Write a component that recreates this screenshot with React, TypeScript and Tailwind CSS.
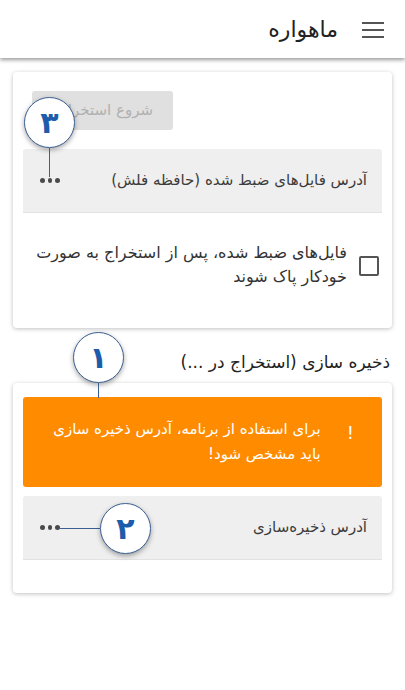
import { ReactNode } from 'react';

const font = "font-['DejaVu_Sans',sans-serif]";

const Dots = () => (
  <div className="flex items-center gap-[3px]" dir="ltr">
    <span className="w-[4.5px] h-[4.5px] rounded-full bg-[#4a4a4a]" />
    <span className="w-[4.5px] h-[4.5px] rounded-full bg-[#4a4a4a]" />
    <span className="w-[4.5px] h-[4.5px] rounded-full bg-[#4a4a4a]" />
  </div>
);

const Badge = ({ children }: { children: ReactNode }) => (
  <div className="w-[51px] h-[51px] rounded-full bg-white border-[1.5px] border-[#3b5f92] shadow-[0_2px_5px_rgba(0,0,0,0.35)] flex items-center justify-center text-[#1d5cab] text-[30px] font-bold leading-none">
    {children}
  </div>
);

const PathRow = ({ label, children }: { label: string, children?: ReactNode }) => (
  <div className="relative h-[64px] bg-[#efefef] border-b border-[#e2e2e2] flex items-center justify-between pr-[15px] pl-[17px] rounded-t-[3px]">
    <span className="text-[15px] text-[#3c3c3c]">{label}</span>
    <Dots />
    {children}
  </div>
);

export default function App() {
  return (
    <div dir="rtl" className={`${font} w-[405px] min-h-[690px] bg-white text-[#222]`}>
      <header className="h-[58px] bg-white shadow-[0_2px_4px_rgba(0,0,0,0.4)] flex items-center pr-[21px] gap-[24px]">
        <svg width="22" height="16" viewBox="0 0 22 16" className="mt-[1px]">
          <rect x="0" y="0" width="22" height="2" fill="#555" />
          <rect x="0" y="7" width="22" height="2" fill="#555" />
          <rect x="0" y="14" width="22" height="2" fill="#555" />
        </svg>
        <h1 className="text-[22px] text-[#222]">ماهواره</h1>
      </header>

      <main className="px-[13px] pt-[14px]">
        <section className="rounded-[4px] bg-white shadow-[0_1px_4px_rgba(0,0,0,0.25)] px-[10px] pt-[19px] pb-[12px] flex flex-col">
          <button
            type="button"
            disabled
            className="self-end ml-[9px] w-[141px] h-[39px] rounded-[3px] bg-[#e0e0e0] text-[#b0b0b0] text-[15px] tracking-[1px] flex items-center justify-start pr-[20px] whitespace-nowrap overflow-hidden"
          >
            شروع استخراج
          </button>
          <div className="mt-[19px]">
            <PathRow label="آدرس فایل‌های ضبط شده (حافظه فلش)">
              <div className="absolute left-[1px] top-[-52px] flex flex-col items-center">
                <Badge>۳</Badge>
                <div className="w-[1.5px] h-[29px] bg-[#3b5f92]" />
              </div>
            </PathRow>
          </div>
          <label className="flex items-center gap-[12px] pr-[3px] h-[103px]">
            <span className="w-[20px] h-[20px] border-2 border-[#555] rounded-[2px] shrink-0 mt-[2px]" />
            <span className="text-[16px] leading-[24px] text-[#333]">
              فایل‌های ضبط شده، پس از استخراج به صورت خودکار پاک شوند
            </span>
          </label>
        </section>

        <h2 className="mt-[21px] mb-[8px] pr-[2px] text-[17px] leading-[26px] text-[#222]">
          ذخیره سازی (استخراج در ...)
        </h2>

        <section className="relative rounded-[4px] bg-white shadow-[0_1px_4px_rgba(0,0,0,0.25)] px-[10px] pt-[14px] pb-[33px] flex flex-col gap-[9px]">
          <div className="absolute left-[60px] top-[-51px] flex flex-col items-center">
            <Badge>۱</Badge>
            <div className="w-[1.5px] h-[15px] bg-[#3b5f92]" />
          </div>
          <div className="h-[90px] bg-[#ff8c00] rounded-[3px] flex items-center pr-[28px] pl-[16px] gap-[26px] text-white">
            <span className="text-[18px] self-start mt-[22px]">!</span>
            <span className="text-[15px] leading-[25px] whitespace-nowrap">
              برای استفاده از برنامه، آدرس ذخیره سازی
              <br />
              باید مشخص شود!
            </span>
          </div>
          <PathRow label="آدرس ذخیره‌سازی">
            <div className="absolute left-[37px] top-[7px] flex items-center" dir="ltr">
              <div className="w-[40px] h-[1.5px] bg-[#3b5f92]" />
              <Badge>۲</Badge>
            </div>
          </PathRow>
        </section>
      </main>
    </div>
  );
}
